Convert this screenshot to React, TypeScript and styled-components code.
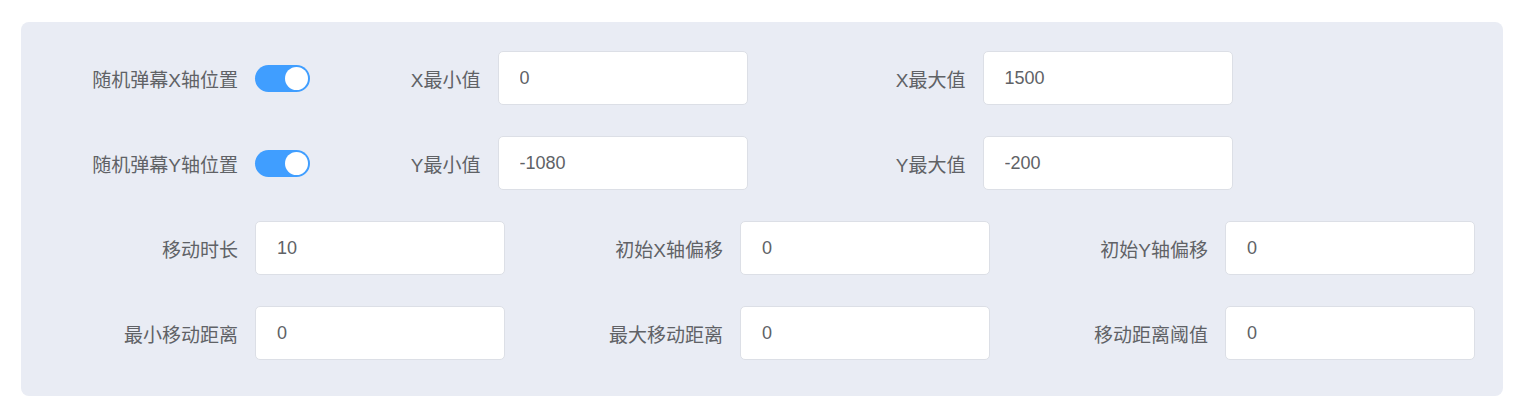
import React from 'react';
import styled, { createGlobalStyle } from 'styled-components';

const GlobalStyle = createGlobalStyle`
  html, body {
    margin: 0;
    padding: 0;
    background: #ffffff;
  }
  body {
    font-family: 'Liberation Sans', 'Noto Sans CJK SC', sans-serif;
  }
`

const Page = styled.div`
  padding: 22px 22px 20px 21px;
`

const Panel = styled.div`
  background: #e9ecf4;
  border-radius: 8px;
  padding: 29px 27px 5px 0;
`

const Row = styled.div<{ $cols: string }>`
  display: grid;
  grid-template-columns: ${p => p.$cols};
  margin-bottom: 31px;
`

const Item = styled.div`
  display: flex;
  align-items: center;
  height: 54px;
  min-width: 0;
`

const Label = styled.label`
  flex: 0 0 234px;
  box-sizing: border-box;
  padding-right: 17px;
  text-align: right;
  font-size: 19px;
  color: #606266;
  white-space: nowrap;
`

const Input = styled.input`
  flex: 0 0 250px;
  box-sizing: border-box;
  width: 250px;
  height: 54px;
  padding: 0 21px;
  border: 1px solid #dcdfe6;
  border-radius: 5px;
  background: #fff;
  font-family: 'Liberation Sans', 'Noto Sans CJK SC', sans-serif;
  font-size: 18px;
  color: #606266;
  outline: none;
`

const Switch = styled.span<{ $on: boolean }>`
  position: relative;
  flex: 0 0 55px;
  display: inline-block;
  width: 55px;
  height: 27px;
  border-radius: 14px;
  background: ${p => (p.$on ? '#409eff' : '#dcdfe6')};
  &::after {
    content: '';
    position: absolute;
    top: 2px;
    left: ${p => (p.$on ? '30px' : '2px')};
    width: 23px;
    height: 23px;
    border-radius: 50%;
    background: #fff;
  }
`

type Field = { label: string; value: string }

const Field: React.FC<Field> = ({ label, value }) => (
  <Item>
    <Label>{label}</Label>
    <Input defaultValue={value} />
  </Item>
)

const App: React.FC = () => {
  const rangeRows = [
    { toggle: '随机弹幕X轴位置', min: { label: 'X最小值', value: '0' }, max: { label: 'X最大值', value: '1500' } },
    { toggle: '随机弹幕Y轴位置', min: { label: 'Y最小值', value: '-1080' }, max: { label: 'Y最大值', value: '-200' } },
  ]
  const fieldRows: Field[][] = [
    [
      { label: '移动时长', value: '10' },
      { label: '初始X轴偏移', value: '0' },
      { label: '初始Y轴偏移', value: '0' },
    ],
    [
      { label: '最小移动距离', value: '0' },
      { label: '最大移动距离', value: '0' },
      { label: '移动距离阈值', value: '0' },
    ],
  ]

  return (
    <Page>
      <GlobalStyle />
      <Panel>
        {rangeRows.map(r => (
          <Row key={r.toggle} $cols="1fr 2fr 2fr 1fr">
            <Item>
              <Label>{r.toggle}</Label>
              <Switch $on />
            </Item>
            <Field {...r.min} />
            <Field {...r.max} />
          </Row>
        ))}
        {fieldRows.map((row, i) => (
          <Row key={i} $cols="repeat(3, 1fr)">
            {row.map(f => (
              <Field key={f.label} {...f} />
            ))}
          </Row>
        ))}
      </Panel>
    </Page>
  )
}

export default App
